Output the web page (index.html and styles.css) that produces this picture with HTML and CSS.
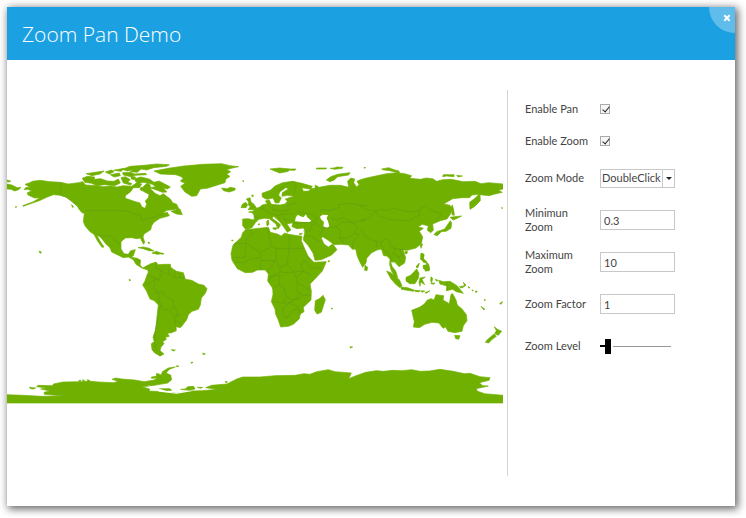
FILE: index.html
```html
<!DOCTYPE html>
<html lang="en">
<head>
<meta charset="utf-8">
<meta name="viewport" content="width=device-width, initial-scale=1">
<title>Zoom Pan Demo</title>
<link rel="stylesheet" href="styles.css">
</head>
<body>
<main class="window">
  <header class="titlebar">
    <h1 class="title">Zoom Pan Demo</h1>
    <button class="close" type="button" aria-label="Close">
      <svg class="close-icon" viewBox="0 0 8 8" aria-hidden="true"><path d="M1.3 1.3 6.7 6.7M6.7 1.3 1.3 6.7"/></svg>
    </button>
  </header>
  <div class="content">
    <svg class="map" viewBox="21 21 1488 729" role="img" aria-label="World map">
      <!-- North America -->
      <g class="land">
        <path d="M75 88 90 83 97 79 120 76 150 80 182 82 205 87 235 83 248 80 257 90 290 92 310 95 332 93 350 96 370 92 395 94 412 82 425 88 418 98 400 98 392 110 376 122 376 130 400 138 420 144 426 156 435 160 440 148 436 138 445 128 447 118 432 110 430 95 442 84 450 90 452 102 465 115 480 122 490 116 500 124 511 132 518 143 530 148 535 158 522 164 500 166 487 176 502 172 508 182 494 186 480 190 462 202 455 212 452 224 432 237 429 246 434 262 431 268 424 256 422 249 410 251 395 248 376 249 363 260 363 282 372 296 385 298 392 287 406 284 400 302 394 307 412 310 422 316 420 330 428 339 443 331 452 342 440 344 424 338 408 328 400 314 385 306 370 308 335 291 330 278 317 266 303 248 290 239 300 258 312 276 306 277 292 257 282 238 270 230 256 214 250 200 253 174 238 164 232 154 215 138 198 126 182 121 160 119 140 127 118 137 95 145 70 154 68 152 100 140 120 128 104 129 84 120 82 113 95 108 84 103 72 104 78 97 92 98Z"/>
        <path d="M21 75 32 78 29 81 21 80ZM21 87 35 90 52 98 63 97 56 104 44 108 33 103 21 102ZM215 149 221 156 217 157ZM240 166 254 174 247 174ZM118 288 124 291 122 295 118 292ZM47 154 50 156 47 158Z"/>
        <path d="M247 70 262 64 284 66 282 73 302 71 322 78 342 79 355 72 361 84 344 92 313 89 291 92 275 85 254 82ZM258 56 285 52 312 48 300 57 276 62ZM316 51 334 45 342 50 328 57ZM331 59 358 54 361 62 342 66ZM340 46 372 40 364 49ZM367 43 390 34 432 31 470 27 508 29 500 34 461 38 440 45 423 42 412 52 390 50 399 44 382 48ZM368 53 391 52 404 57 437 55 440 59 405 61 393 65 370 60ZM363 68 376 65 391 74 383 81 396 86 391 90 370 84ZM393 64 407 66 402 74 394 72ZM404 71 423 66 448 72 462 82 477 78 511 96 502 102 490 99 501 111 487 112 467 104 450 98 467 95 457 88 432 82 416 85 406 79ZM421 98 434 96 444 105 431 109 421 105ZM513 169 528 165 530 157 540 163 547 179 529 177ZM472 182 490 173 503 180 488 186ZM414 278 430 276 448 280 462 288 446 287 430 281ZM456 294 469 289 488 296 471 298ZM444 261 450 264 446 266ZM484 294 492 296 486 298Z"/>
        <path d="M462 48 510 39 552 33 608 28 665 26 690 32 716 35 694 40 680 44 692 50 680 58 690 64 677 73 675 83 650 91 621 100 601 102 590 122 575 124 555 111 542 94 555 85 541 78 550 70 541 64 527 59 481 57Z"/>
        <path d="M665 99 682 101 690 97 706 100 704 106 687 111 671 107Z"/>
        <path d="M387 373 392 375 389 378ZM728 77 732 78 729 80ZM757 121 760 121 759 125ZM695 255 700 256 696 258Z"/>
      </g>
      <!-- South America and Antarctic Peninsula islands -->
      <g class="land" transform="translate(390 285)">
        <path d="M50 48 60 42 78 36 84 44 102 43 121 43 123 53 140 64 160 68 166 88 185 91 205 102 222 106 231 116 226 130 214 144 211 165 205 178 186 184 175 194 170 209 158 225 151 233 138 230 139 242 125 248 112 250 118 259 106 262 109 268 98 275 102 281 93 291 90 302 102 312 91 317 75 310 66 299 64 281 73 275 69 262 76 241 79 220 82 190 85 165 73 152 60 147 49 122 38 105 45 93 50 78 55 66Z"/>
        <path d="M124 299 136 300 130 303ZM218 309 226 312 220 314ZM184 337 188 338 184 340Z"/>
      </g>
      <!-- Europe and Asia -->
      <g class="land" transform="translate(660 0)">
        <path d="M68 192 84 191 102 195 103 183 98 174 86 171 101 168 103 162 118 157 127 150 142 146 136 138 147 134 154 148 180 150 195 147 202 139 196 132 222 124 203 121 186 124 187 113 206 101 197 98 179 111 176 121 184 129 177 143 166 144 159 129 140 133 127 126 126 115 151 106 165 93 188 83 218 79 246 85 277 94 272 103 246 98 250 109 267 108 274 101 285 100 286 90 297 97 329 91 362 91 386 97 383 79 392 69 404 72 401 83 410 96 417 89 411 79 421 74 436 70 467 63 500 56 530 53 554 56 575 62 569 70 602 73 618 69 638 71 650 79 668 74 694 73 730 80 765 79 783 86 806 83 850 87 849 102 835 106 847 112 825 117 807 122 780 119 781 137 763 155 750 163 749 142 765 130 777 118 756 120 749 128 726 128 698 131 671 147 690 151 695 158 692 176 681 192 661 197 638 207 640 226 632 233 622 226 625 213 607 208 594 215 610 220 598 229 608 246 604 266 588 279 562 286 549 285 557 307 554 324 537 335 524 321 512 321 516 334 527 348 533 367 526 367 514 347 509 329 510 312 500 303 491 302 484 282 471 285 454 294 440 310 438 324 428 337 419 320 412 304 407 282 397 283 386 270 363 268 342 269 325 256 308 245 304 250 312 267 325 276 338 267 351 284 335 300 304 314 285 316 279 294 265 272 250 255 255 228 251 219 231 221 216 215 218 203 201 207 213 225 202 232 189 213 178 199 161 184 156 190 173 202 182 210 174 222 168 207 148 191 134 190 117 193 107 202 95 219 77 223 68 212Z"/>
        <path d="M63 158 67 148 77 142 83 149 78 158ZM79 132 90 128 93 141 102 148 109 158 100 164 84 164 91 155 85 150 86 141ZM95 120 98 121 97 125ZM140 199 145 195 147 208 141 213ZM158 219 170 218 168 224 160 222ZM207 239 220 241 211 244ZM237 237 247 234 242 240ZM114 207 120 207 116 210ZM150 42 178 39 212 42 205 49 191 52 179 54 164 48ZM212 42 228 42 224 46 211 46ZM290 39 320 39 317 42 289 42ZM330 40 342 39 351 36 369 37 367 40 344 43ZM319 75 332 65 353 58 390 53 386 60 353 65 343 75 330 80ZM435 331 443 337 441 347 434 346ZM309 421 316 434 304 472 291 477 284 466 286 437 300 430ZM325 317 330 318 326 321ZM334 459 338 461 335 462Z"/>
        <path d="M485 42 506 38 522 44 537 48 538 54 509 47 487 44ZM670 59 702 59 702 65 680 63 668 65ZM710 61 727 63 714 66ZM697 150 701 164 703 181 697 180 692 160ZM690 187 703 185 725 183 712 190 699 195ZM691 197 695 204 693 220 678 229 664 230 652 242 642 239 650 230 674 222ZM601 269 608 267 603 280ZM555 289 563 290 560 297 554 294ZM603 295 612 298 609 310 620 320 612 323 603 313ZM609 332 626 327 629 345 617 349ZM589 333 598 326 592 338ZM845 157 848 159 846 161ZM432 37 437 38 433 40Z"/>
      </g>
      <!-- Africa -->
      <g class="land" transform="translate(660 0)">
        <path d="M76 225 104 221 145 217 151 232 172 237 184 243 194 234 210 239 246 244 244 257 254 281 264 303 280 322 319 320 307 348 284 373 270 387 274 408 273 435 250 457 252 470 241 477 238 491 220 508 205 514 182 516 174 493 167 478 165 462 154 440 159 418 158 400 143 378 145 357 136 345 112 345 98 352 76 353 52 341 36 316 33 296 39 270 64 247 68 233Z"/>
      </g>
      <!-- Oceania -->
      <g class="land" transform="translate(1050 255)">
        <path d="M185 211 208 202 223 192 232 180 244 176 252 180 258 164 281 167 279 180 298 191 303 163 308 161 318 180 322 195 336 207 349 224 351 242 340 257 336 274 314 278 294 274 287 261 279 265 267 249 246 247 224 253 208 263 190 261 193 245Z"/>
        <path d="M314 286 330 287 326 298 317 296ZM433 260 442 268 455 274 445 286 434 281 439 272ZM432 282 439 289 425 299 416 309 406 307 412 299ZM110 93 124 99 148 119 156 137 150 143 137 133 123 117ZM153 141 173 143 194 151 190 154 154 148ZM168 112 182 106 200 87 207 100 205 115 195 131 179 131 168 123ZM210 114 226 111 216 118 224 134 212 126 210 139 207 127ZM266 121 280 125 300 124 321 137 340 160 319 155 308 148 289 152 291 138 270 132ZM213 40 222 43 220 60 212 58ZM221 76 237 80 237 93 220 86ZM199 82 207 70 203 84ZM226 62 234 71 229 73ZM243 110 248 115 245 128 242 122ZM242 130 255 129 250 133ZM328 140 345 137 340 142 333 144ZM340 127 348 135 344 138ZM355 139 360 144 356 144ZM366 149 370 152 367 153ZM376 153 382 154 378 158ZM393 199 405 208 401 209ZM403 178 407 180 404 182ZM449 190 458 185 453 193ZM195 151 210 152 208 155 196 155ZM225 158 240 152 229 160ZM212 152 224 153 216 157ZM0 320 8 321 1 324ZM256 118 264 121 260 124Z"/>
      </g>
      <!-- Antarctica -->
      <g class="land" transform="translate(0 600)">
        <path d="M21 119 70 121 125 124 190 123 133 118 132 112 150 108 122 102 140 99 110 95 114 91 158 92 160 87 190 81 240 80 265 78 295 81 340 83 355 79 336 73 347 69 365 72 404 75 432 80 460 76 473 69 455 70 454 66 469 64 470 55 484 60 487 50 505 39 526 36 508 43 498 54 512 60 515 74 503 84 480 88 450 93 425 95 449 102 447 108 490 110 528 115 570 108 608 107 652 103 617 98 635 91 681 87 710 72 728 66 780 66 825 62 885 61 912 56 930 58 950 50 985 44 1005 50 1054 54 1046 71 1068 62 1097 52 1129 47 1150 49 1180 46 1205 47 1235 44 1260 49 1288 48 1320 43 1360 49 1393 56 1410 55 1440 65 1470 68 1467 76 1438 83 1448 92 1465 93 1428 101 1433 109 1454 116 1509 121 1509 144 21 144Z"/>
        <path d="M88 97 107 99 100 102 92 101ZM542 103 556 102 563 95 581 94 585 102 566 106ZM592 97 608 97 602 100ZM236 77 242 75 240 80ZM247 75 253 75 251 79ZM262 74 269 76 265 79ZM675 80 681 79 681 84ZM478 101 510 101 515 106 490 107ZM528 33 537 33 534 35ZM475 0 485 0 480 3ZM574 22 578 22 576 24Z"/>
      </g>
      <!-- Seas and lakes inside the land shapes -->
      <g class="water">
        <path d="M885 199 887 188 893 179 902 184 910 187 918 178 921 186 934 197 929 201 913 201 900 200ZM960 185 968 179 984 180 980 190 984 199 988 214 982 219 970 214 972 201 963 193Z"/>
        <path d="M442 690 500 708 525 714 560 707 578 708 530 716 478 710Z"/>
      </g>
      <!-- Country borders -->
      <g class="borders">
        <path d="M182 82V121L198 126 230 151M253 167H373L390 171 408 178 423 180 425 198 442 190 464 187 487 178M289 238 318 245 330 241 340 253 360 266M386 297 395 291M411 314 420 318"/>
        <g transform="translate(390 285)"><path d="M80 40 76 52 94 62 94 77 86 91 76 84 55 75M94 62 118 75 116 54M118 75 132 82 165 85M132 64 136 80M150 70 151 84M45 101 56 103 75 85 90 91M75 85 72 118 85 127 88 153 92 163 84 202 77 240 73 278 80 302M72 130 98 126 108 140 130 152 132 165 142 190 135 210 137 227M92 163 98 178 118 181 132 171M118 181 134 198 149 194M135 210 157 226M90 302V313"/></g>
        <g transform="translate(660 0)"><path d="M75 225 92 225 98 237 78 252 77 265 42 266M78 265 122 293 155 275 148 251 145 220M122 293V308L90 313 72 323 44 322M77 269 75 307 37 308M155 275 169 280 208 280M208 240V280H253M169 280 168 318 122 316 121 344M208 280 201 327 221 350 250 349 273 358M168 318 180 337 201 327M145 346 155 333 164 315M180 337 180 351 151 366 149 379M180 351 208 353 221 350 228 368 232 383 270 405M151 366 180 360 177 390 157 401M177 390 195 403 197 423 214 434 237 432 247 420 231 410 232 383M157 440 190 444 209 443 190 457 190 482M190 444 199 426M209 443 229 432 236 415M209 443 240 459M190 482 202 488 219 466 237 462 240 477M247 420 272 422M228 368 250 349 242 330 252 314 275 338 304 340M262 305 282 322M250 247 266 240 300 260M250 228 271 228 276 210 287 205 308 222 302 240M220 205 271 203 292 194 279 178 230 170M308 222 332 216 348 216 360 224 359 249 373 267M359 249 382 250 403 234 414 216 397 203 363 201 348 216M302 171 304 163 330 166 357 158 357 149 393 145 417 151 449 153M335 190 350 195 369 188 387 197 397 203 437 191M403 234 417 239 397 264 398 279M130 150 133 165 149 174 170 181 190 177 219 176M101 184 121 190M118 158 134 164M159 150 158 165 181 168 205 166 203 151 233 143M179 181 178 194M189 181 197 194M189 194 218 196M223 80 229 94 222 118M222 80 200 85 174 110"/></g>
        <g transform="translate(1080 0)"><path d="M0 152 20 164 48 169 64 164 89 166 94 159 117 164 142 170 178 169 181 159 195 152 212 163 222 171 242 174 236 190 224 204M48 169 54 182 86 193 117 196 148 198 164 187 178 181 178 169M48 169 29 185 15 196 0 198M0 224 10 232 12 243 38 255 62 262 78 251 91 259 89 272 105 281 120 282 134 284M62 262 68 280 78 292 91 302 96 317M105 281 98 296 114 303 122 320M120 282 126 302 110 305M39 256 49 260 50 278"/></g>
        <path d="M1341 380V408"/>
      </g>
    </svg>
    <form class="panel">
      <div class="row row-check">
        <label class="label" for="pan">Enable Pan</label>
        <input class="check" id="pan" type="checkbox" checked>
      </div>
      <div class="row row-check">
        <label class="label" for="zoom">Enable Zoom</label>
        <input class="check" id="zoom" type="checkbox" checked>
      </div>
      <div class="row">
        <label class="label" for="mode">Zoom Mode</label>
        <div class="picker">
          <select class="field select" id="mode"><option>DoubleClick</option></select>
          <span class="arrow"></span>
        </div>
      </div>
      <div class="row">
        <label class="label" for="min">Minimun<br>Zoom</label>
        <input class="field" id="min" type="text" value="0.3">
      </div>
      <div class="row">
        <label class="label" for="max">Maximum<br>Zoom</label>
        <input class="field" id="max" type="text" value="10">
      </div>
      <div class="row">
        <label class="label" for="factor">Zoom Factor</label>
        <input class="field" id="factor" type="text" value="1">
      </div>
      <div class="row">
        <label class="label" for="level">Zoom Level</label>
        <input class="slider" id="level" type="range" min="0" max="12" value="1">
      </div>
    </form>
  </div>
</main>
</body>
</html>
```
FILE: styles.css
```css
* {
  box-sizing: border-box;
}

body {
  margin: 0;
  padding: 7px 11px 11px 7px;
  background: #fff;
  color: #444;
  font: 11px/14px Lato, "Open Sans", sans-serif;
}

.window {
  background: #fff;
  box-shadow: 2px 2px 8px 1px rgba(0, 0, 0, 0.6);
}

.titlebar {
  position: relative;
  display: flex;
  align-items: center;
  height: 53px;
  padding: 0 15px;
  overflow: hidden;
  background: #1ba0e2;
}

.title {
  margin: 0;
  color: #fff;
  font-family: "Open Sans", sans-serif;
  font-size: 21px;
  font-weight: 300;
  line-height: 30px;
}

.close {
  position: absolute;
  top: 0;
  right: 0;
  display: flex;
  justify-content: flex-end;
  width: 26px;
  height: 26px;
  padding: 7px 4px;
  border: 0;
  border-radius: 0 0 0 26px;
  background: #60bcea;
}

.close-icon {
  width: 8px;
  height: 8px;
  fill: none;
  stroke: #fff;
  stroke-width: 2;
}

.content {
  display: grid;
  grid-template-columns: 1fr 228px;
  align-items: center;
  padding: 30px 0;
}

.map {
  display: block;
  width: calc(100% - 4px);
}

.land {
  fill: #70b000;
  stroke: #70b000;
  stroke-width: 2;
  stroke-linejoin: round;
}

.water {
  fill: #fff;
}

.borders {
  fill: none;
  stroke: #5fa010;
  stroke-width: 2;
}

.panel {
  min-height: 386px;
  padding: 3px 17px;
  border-left: 1px solid #d4d4d4;
}

.row {
  display: grid;
  grid-template-columns: 65px 75px;
  column-gap: 10px;
  align-items: center;
  height: 42px;
}

.row-check {
  height: 32px;
}

.check {
  appearance: none;
  width: 10px;
  height: 10px;
  margin: 0;
  border: 1px solid #aaa;
  background: #f6f6f6;
}

.check:checked::before {
  content: "";
  display: block;
  width: 3px;
  height: 6px;
  margin: 0 0 0 3px;
  border: solid #222;
  border-width: 0 1px 1px 0;
  transform: rotate(40deg);
}

.field {
  width: 100%;
  height: 20px;
  margin: 0;
  padding: 0 3px;
  border: 1px solid #c8c8c8;
  border-radius: 0;
  background: #fff;
  color: #444;
  font: inherit;
}

.picker {
  position: relative;
}

.select {
  display: block;
  appearance: none;
  height: 19px;
  padding: 0 0 0 1px;
}

.arrow {
  position: absolute;
  top: 1px;
  right: 1px;
  bottom: 1px;
  display: flex;
  align-items: center;
  justify-content: center;
  width: 12px;
  border-left: 1px solid #c8c8c8;
  pointer-events: none;
}

.arrow::before {
  content: "";
  border: solid transparent;
  border-width: 3px 3px 0;
  border-top-color: #222;
}

.slider {
  appearance: none;
  width: 71px;
  height: 15px;
  margin: 0;
  background:
    linear-gradient(#000, #000) left center / 5px 2px no-repeat,
    linear-gradient(#999, #999) right center / 58px 1px no-repeat;
}

.slider::-webkit-slider-thumb {
  appearance: none;
  width: 6px;
  height: 15px;
  border: 0;
  border-radius: 0;
  background: #000;
}
```
